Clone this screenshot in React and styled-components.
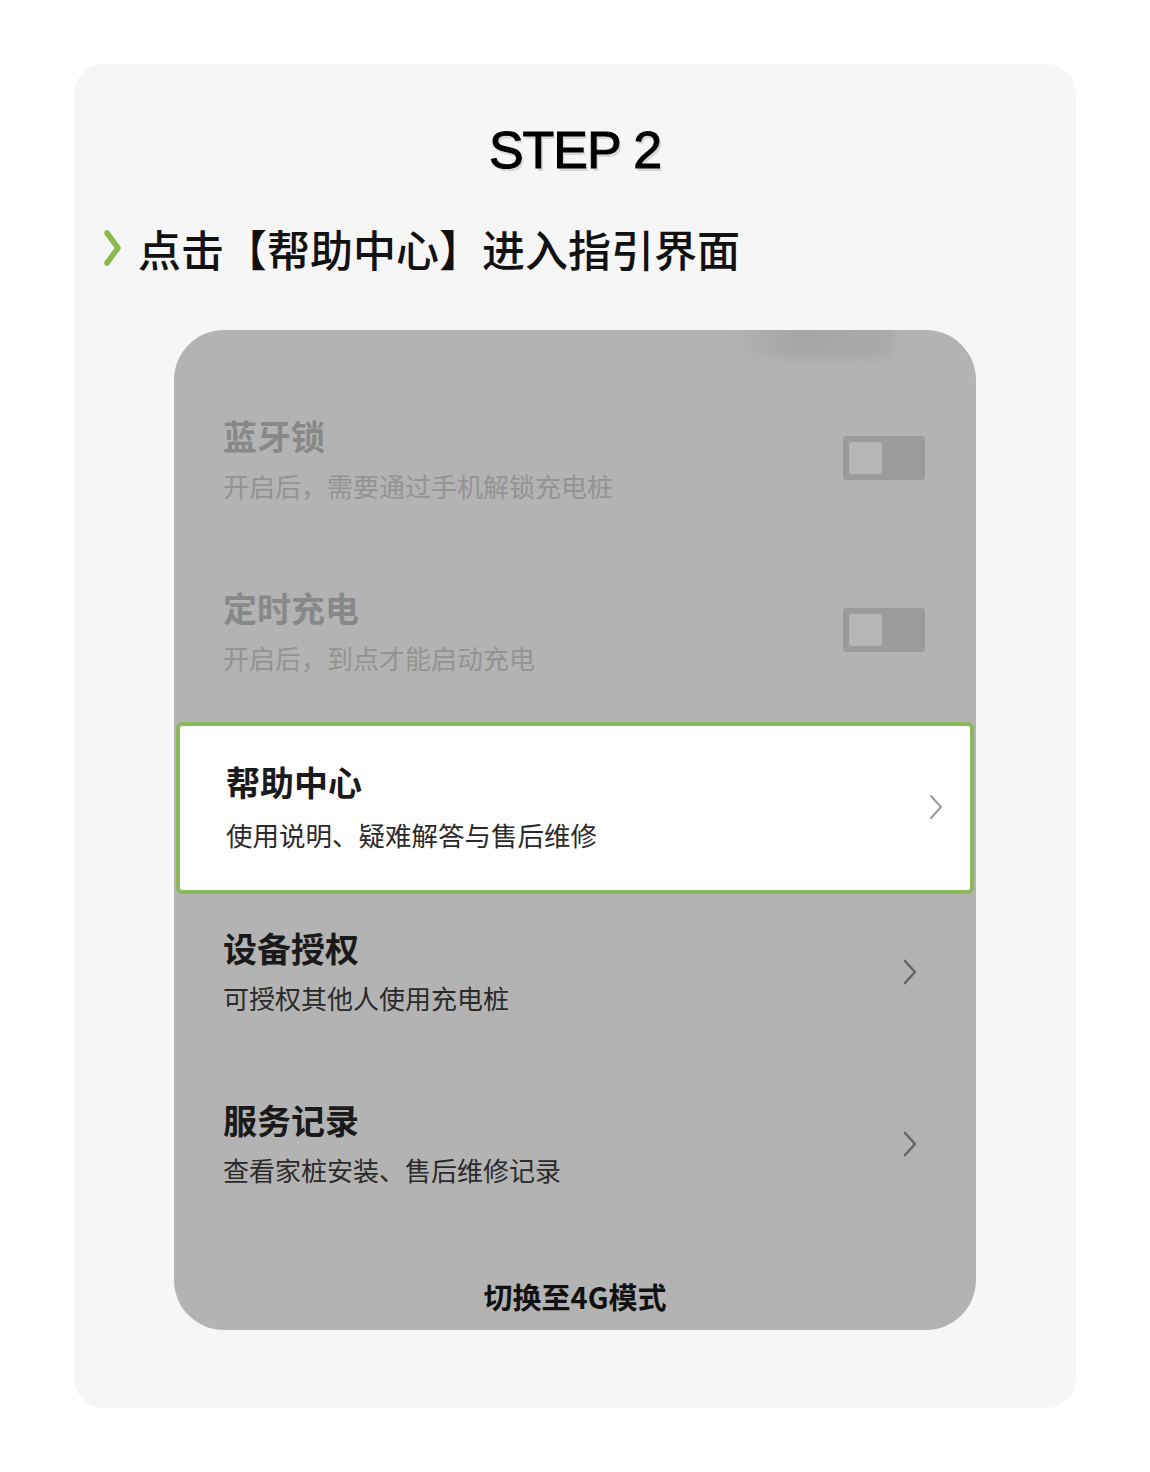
import React from "react";
import styled, { createGlobalStyle } from "styled-components";

const GlobalStyle = createGlobalStyle`
  body {
    margin: 0;
    background: #ffffff;
    font-family: "Noto Sans CJK SC", "Noto Sans", sans-serif;
  }
`;

const rows = [
  { title: "蓝牙锁", sub: "开启后，需要通过手机解锁充电桩", kind: "toggle" },
  { title: "定时充电", sub: "开启后，到点才能启动充电", kind: "toggle" },
  { title: "帮助中心", sub: "使用说明、疑难解答与售后维修", kind: "link", active: true },
  { title: "设备授权", sub: "可授权其他人使用充电桩", kind: "link" },
  { title: "服务记录", sub: "查看家桩安装、售后维修记录", kind: "link" },
];

function Chevron({ light }) {
  return (
    <ChevronIcon viewBox="0 0 16 26" $light={light}>
      <path d="M3 2 L13 13 L3 24" />
    </ChevronIcon>
  );
}

function App() {
  return (
    <>
      <GlobalStyle />
      <Card>
        <StepTitle>STEP 2</StepTitle>
        <Heading>
          <svg width="18" height="36" viewBox="0 0 18 36">
            <path d="M3 3 L14 18 L3 33" fill="none" stroke="#8cb84f" strokeWidth="5.5" strokeLinecap="round" strokeLinejoin="round" />
          </svg>
          <span>点击【帮助中心】进入指引界面</span>
        </Heading>
        <Phone>
          <StatusBlur />
          {rows.map((r) => (
            <Row key={r.title} $active={r.active}>
              <TextBlock>
                <RowTitle $muted={r.kind === "toggle"}>{r.title}</RowTitle>
                <RowSub $muted={r.kind === "toggle"} $active={r.active}>{r.sub}</RowSub>
              </TextBlock>
              {r.kind === "toggle" ? (
                <Toggle>
                  <Knob />
                </Toggle>
              ) : (
                <Chevron light={r.active} />
              )}
            </Row>
          ))}
          <Footer>切换至4G模式</Footer>
        </Phone>
      </Card>
    </>
  );
}

const Card = styled.div`
  margin: 64px 0 0 74px;
  width: 1002px;
  height: 1344px;
  box-sizing: border-box;
  background: #f6f6f6;
  border-radius: 30px;
  padding: 56px 0 0 30px;
`;

const StepTitle = styled.div`
  font-family: "Liberation Sans", Arial, sans-serif;
  font-size: 52px;
  line-height: 60px;
  letter-spacing: -1px;
  text-align: center;
  color: #000;
  margin-left: -30px;
  -webkit-text-stroke: 1px #000;
  text-shadow: 2px 3px 0 #d9d9d9;
`;

const Heading = styled.div`
  display: flex;
  align-items: center;
  gap: 16px;
  margin-top: 43px;
  height: 50px;
  span {
    font-size: 43px;
    font-weight: 500;
    color: #111;
    line-height: 50px;
  }
`;

const Phone = styled.div`
  position: relative;
  margin: 57px 0 0 70px;
  width: 802px;
  height: 1000px;
  box-sizing: border-box;
  background: #b3b3b3;
  border-radius: 50px;
  padding: 45px 0 14px;
  display: flex;
  flex-direction: column;
  overflow: hidden;
`;

const StatusBlur = styled.div`
  position: absolute;
  top: -6px;
  left: 560px;
  width: 160px;
  height: 34px;
  background: linear-gradient(90deg, rgba(150,150,150,0) 0%, rgba(140,140,140,0.35) 40%, rgba(150,150,150,0.3) 100%);
  filter: blur(5px);
`;

const Row = styled.div`
  height: 172px;
  box-sizing: border-box;
  display: flex;
  align-items: center;
  justify-content: space-between;
  padding: 0 58px 0 49px;
  &:nth-of-type(5) {
    margin-top: -4px;
  }
  ${(p) =>
    p.$active &&
    `
    background: #ffffff;
    border: 4px solid #8bb85a;
    border-radius: 6px;
    margin: 3px 2px -3px;
    padding: 0 26px 0 46px;
  `}
`;

const TextBlock = styled.div`
  display: flex;
  flex-direction: column;
  margin-top: -5px;
`;

const RowTitle = styled.div`
  font-size: 34px;
  font-weight: 700;
  line-height: 44px;
  color: ${(p) => (p.$muted ? "#888888" : "#1a1a1a")};
`;

const RowSub = styled.div`
  font-size: ${(p) => (p.$active ? "26.5px" : "26px")};
  line-height: 34px;
  margin-top: ${(p) => (p.$active ? "14px" : "11px")};
  color: ${(p) => (p.$muted ? "#939393" : "#2a2a2a")};
`;

const Toggle = styled.div`
  width: 82px;
  height: 44px;
  margin: -6px -7px 0 0;
  box-sizing: border-box;
  background: #9b9b9b;
  border-radius: 4px;
  padding: 6px;
  display: flex;
`;

const Knob = styled.div`
  width: 33px;
  height: 32px;
  background: #b6b6b6;
  border-radius: 3px;
`;

const ChevronIcon = styled.svg`
  width: 16px;
  height: 26px;
  margin-top: -2px;
  fill: none;
  stroke: ${(p) => (p.$light ? "#9a9a9a" : "#666666")};
  stroke-width: ${(p) => (p.$light ? 2 : 2.6)};
  stroke-linecap: round;
  stroke-linejoin: round;
`;

const Footer = styled.div`
  margin-top: auto;
  text-align: center;
  font-size: 29px;
  font-weight: 700;
  line-height: 40px;
  color: #111;
`;

export default App;
